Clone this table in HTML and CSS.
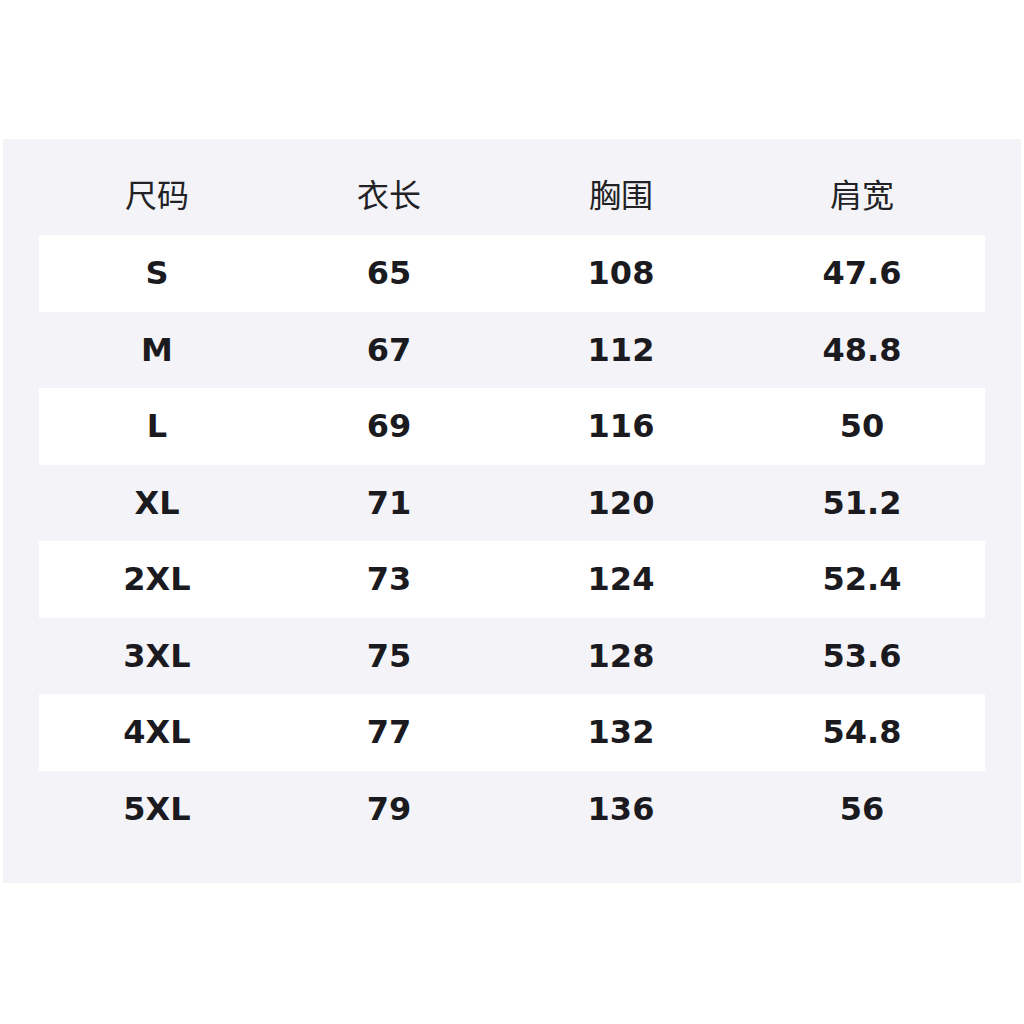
FILE: index.html
```html
<!DOCTYPE html>
<html lang="zh">
<head>
<meta charset="utf-8">
<link rel="stylesheet" href="styles.css">
</head>
<body>
<div class="panel">
  <div class="row head">
    <div>尺码</div><div>衣长</div><div>胸围</div><div>肩宽</div>
  </div>
  <div class="row w"><div>S</div><div>65</div><div>108</div><div>47.6</div></div>
  <div class="row"><div>M</div><div>67</div><div>112</div><div>48.8</div></div>
  <div class="row w"><div>L</div><div>69</div><div>116</div><div>50</div></div>
  <div class="row"><div>XL</div><div>71</div><div>120</div><div>51.2</div></div>
  <div class="row w"><div>2XL</div><div>73</div><div>124</div><div>52.4</div></div>
  <div class="row"><div>3XL</div><div>75</div><div>128</div><div>53.6</div></div>
  <div class="row w"><div>4XL</div><div>77</div><div>132</div><div>54.8</div></div>
  <div class="row"><div>5XL</div><div>79</div><div>136</div><div>56</div></div>
</div>
</body>
</html>
```

FILE: styles.css
```css
html, body {
  margin: 0;
  padding: 0;
  background: #ffffff;
}
body {
  padding-top: 139px;
  padding-left: 3px;
}
.panel {
  width: 1018px;
  height: 744px;
  box-sizing: border-box;
  background: #f4f4f8;
  padding: 0 36px 36px 36px;
}
.row {
  display: grid;
  grid-template-columns: 236px 228px 236px 246px;
  align-items: center;
  justify-items: center;
  height: 76.5px;
  font-family: "DejaVu Sans", sans-serif;
  font-weight: bold;
  font-size: 32px;
  color: #1b1b1f;
}
.row.w {
  background: #ffffff;
}
.row.head {
  height: 96px;
  box-sizing: border-box;
  padding: 37px 0 25px;
  font-family: "Noto Sans CJK SC", sans-serif;
  font-weight: normal;
  font-size: 32px;
  line-height: 34px;
  color: #222226;
}
```
